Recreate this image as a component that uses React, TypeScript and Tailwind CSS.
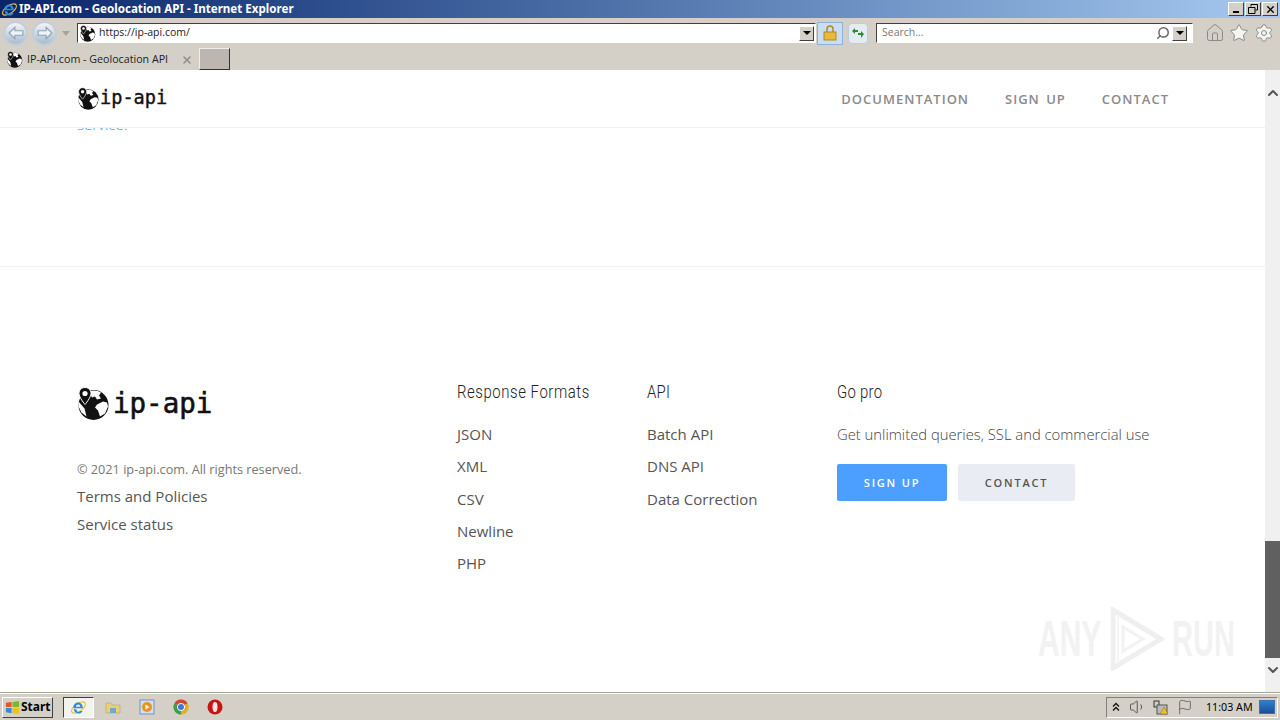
import { ChevronDown, ChevronUp, Flag, Home, Search, Settings, Star, Volume1, X } from "lucide-react";

const formatLinks = ["JSON", "XML", "CSV", "Newline", "PHP"];
const apiLinks = ["Batch API", "DNS API", "Data Correction"];

function Globe({ className }: { className: string }) {
  return (
    <svg viewBox="0 0 32 34" className={className}>
      <circle cx="16.5" cy="18.5" r="15" fill="#111" />
      <path d="M12 5c4-2 9-1 12 1l-2 3 2 3-4 1-2-3-3 1z" fill="#fff" />
      <path d="M20 18l6-3 4 1 1 4-3 7-5 3-2-6-3-3z" fill="#fff" />
      <path d="M1.5 15l6 7 2 8-5-4-3-6z" fill="#fff" />
      <path d="M8 1C4.5 1 2 3.5 2 7c0 4 6 11 6 11s6-7 6-11c0-3.500-2.500-6-6-6z" fill="#111" stroke="#fff" strokeWidth="1" />
      <circle cx="8" cy="7" r="2.600" fill="#fff" />
    </svg>
  );
}

function IeLogo({ className }: { className: string }) {
  return (
    <svg viewBox="0 0 20 20" className={className}>
      <ellipse cx="10" cy="10" rx="9.500" ry="4.500" transform="rotate(-35 10 10)" fill="none" stroke="#e8c040" strokeWidth="1.300" />
      <path d="M4 11h11c.4-4-2-7-5.500-7S3.500 7 4 11zm3-2c.3-1.500 1.300-2.500 2.700-2.500S12 7.500 12.200 9zM4.200 12c.6 3 2.800 5 5.700 5 2.300 0 4-1.100 4.900-3h-3c-.5.700-1.100 1-1.900 1-1.200 0-2.200-1-2.500-3z" fill="#2a8fd8" />
    </svg>
  );
}

function NavButton({ flip }: { flip?: boolean }) {
  return (
    <div className="flex h-[25px] w-[25px] items-center justify-center rounded-full border-2 border-[#c4ced9] bg-gradient-to-b from-[#f2f5f8] to-[#a9bccf]">
      <svg viewBox="0 0 14 12" className={`h-[14px] w-4 ${flip ? "rotate-180" : ""}`}>
        <path d="M1 6l5-5v3h7v4H6v3z" fill="#eef3f8" stroke="#8fa2b6" strokeWidth="1" />
      </svg>
    </div>
  );
}

function DropArrow() {
  return (
    <div className="flex h-[15px] w-[15px] shrink-0 items-center justify-center border border-[#404040] border-t-white border-l-white bg-[#d4d0c8]">
      <div className="h-0 w-0 border-x-[4px] border-t-[4px] border-x-transparent border-t-black" />
    </div>
  );
}

function WinButton({ children }: { children: React.ReactNode }) {
  return (
    <div className="flex h-[14px] w-4 items-center justify-center border border-[#404040] border-t-white border-l-white bg-[#d4d0c8] text-black">
      {children}
    </div>
  );
}

function Watermark() {
  return (
    <div className="pointer-events-none absolute top-[536px] left-[1038px] flex h-[66px] w-[194px] items-center justify-between font-['Liberation_Sans',sans-serif] text-[50px] leading-none font-bold text-[#f2f2f2]">
      <span className="inline-block w-[64px] origin-left scale-x-[0.6]">ANY</span>
      <svg viewBox="0 0 56 64" className="h-[64px] w-[56px] shrink-0">
        <path d="M4 3l48 29L4 61z" fill="none" stroke="#efefef" strokeWidth="5" />
        <path d="M14 20l20 12-20 12z" fill="none" stroke="#f2f2f2" strokeWidth="3" />
        <path d="M9 8v48" fill="none" stroke="#f5f5f5" strokeWidth="2" />
      </svg>
      <span className="inline-block w-[60px] origin-left scale-x-[0.58]">RUN</span>
    </div>
  );
}

export default function App() {
  return (
    <div className="flex h-[720px] w-[1280px] flex-col overflow-hidden bg-[#d4d0c8] font-['Open_Sans',sans-serif]">
      {/* Title bar */}
      <div className="flex h-[18px] shrink-0 items-center justify-between bg-gradient-to-r from-[#0a246a] to-[#a6caf0] pr-[2px] pl-[1px]">
        <div className="flex items-center gap-[1px]">
          <IeLogo className="h-[17px] w-[17px]" />
          <span className="font-['Noto_Sans',sans-serif] text-[11.600px] leading-none font-bold text-white">IP-API.com - Geolocation API - Internet Explorer</span>
        </div>
        <div className="flex items-center gap-[1px]">
          <WinButton><div className="mt-[6px] h-[2px] w-[6px] bg-black" /></WinButton>
          <WinButton>
            <svg viewBox="0 0 10 10" className="h-[10px] w-[10px]">
              <path d="M3 2.500V.500h6.500V6H7.500M.500 3.500h6.500V9.500H.500z" fill="none" stroke="#000" />
            </svg>
          </WinButton>
          <WinButton><X size={11} strokeWidth={3} /></WinButton>
        </div>
      </div>

      {/* Address row */}
      <div className="flex h-[27px] shrink-0 items-center pt-[3px] pl-[3px]">
        <NavButton />
        <div className="ml-[4px]"><NavButton flip /></div>
        <div className="mr-[7px] ml-[5px] h-0 w-0 border-x-[4px] border-t-[5px] border-x-transparent border-t-[#a8a49c]" />
        <div className="flex h-[20px] w-[739px] items-center border border-[#404040] border-r-white border-b-white bg-white pr-[1px]">
          <Globe className="ml-[1px] h-[17px] w-[17px]" />
          <span className="ml-[3px] flex-1 text-[10.500px] text-[#222]">https://ip-api.com/</span>
          <DropArrow />
        </div>
        <div className="ml-[1px] flex h-[23px] w-[26px] items-center justify-center border border-[#8fb2da] bg-[#c9def5]">
          <svg viewBox="0 0 14 16" className="h-[16px] w-[14px]">
            <path d="M4 7V4a3 3 0 016 0v3" fill="none" stroke="#b08a20" strokeWidth="1.500" />
            <rect x="1" y="7" width="12" height="8" fill="#e8b93a" stroke="#b08a20" />
          </svg>
        </div>
        <div className="ml-[5px] flex h-[21px] w-[20px] items-center justify-center rounded-sm border border-[#c0ccd8] bg-[#e3ebf3]">
          <svg viewBox="0 0 14 12" className="h-3 w-[14px]">
            <path d="M1 4l3-3v2h3v2H4v2zM13 7l-3-3v2H7v2h3v3z" fill="#2e8b2e" />
          </svg>
        </div>
        <div className="ml-[8px] flex h-[20px] w-[317px] items-center border border-[#404040] border-r-white border-b-white bg-white pr-[5px]">
          <span className="ml-[5px] flex-1 text-[10.500px] text-[#777]">Search...</span>
          <Search size={14} strokeWidth={2.500} className="-scale-x-100 text-[#666]" />
          <div className="ml-[2px]"><DropArrow /></div>
        </div>
        <div className="ml-[12px] flex items-center gap-[4px]">
          <Home size={20} className="text-[#8a8a84]" strokeWidth={1.200} />
          <Star size={20} className="text-[#8a8a84]" fill="#f4f4f2" strokeWidth={1.200} />
          <Settings size={20} className="ml-[1px] text-[#8a8a84]" fill="#f4f4f2" strokeWidth={1.200} />
        </div>
      </div>

      {/* Tab row */}
      <div className="flex h-[25px] shrink-0 items-end">
        <div className="flex h-[25px] w-[197px] items-center pt-[4px] pr-[4px] pl-[6px]">
          <Globe className="h-[17px] w-[17px]" />
          <span className="ml-[4px] flex-1 text-[10.700px] text-[#222]">IP-API.com - Geolocation API</span>
          <X size={12} strokeWidth={3} className="text-[#8f8b85]" />
        </div>
        <div className="ml-[2px] h-[22px] w-[31px] border border-[#eee] border-r-[#333] border-b-[#333] bg-[#bdb6b0]" />
      </div>

      {/* Page and scrollbar */}
      <div className="relative flex min-h-0 flex-1 border-b border-[#a8a49c] bg-white">
        <div className="min-w-0 flex-1">
          <header className="relative z-10 flex h-[58px] items-center justify-between border-b border-[#f2f2f2] bg-white pr-[96px] pl-[77px]">
            <div className="flex items-center gap-[1px]">
              <Globe className="h-[23px] w-[22px]" />
              <span className="font-['DejaVu_Sans_Mono',monospace] text-[18.600px] leading-none text-[#111] [-webkit-text-stroke:0.4px_#111]">ip-api</span>
            </div>
            <nav className="flex gap-[36px] pt-[2px] text-[13px] font-semibold tracking-[1px] text-[#8a8a8a] [word-spacing:2px]">
              <span>DOCUMENTATION</span>
              <span>SIGN UP</span>
              <span>CONTACT</span>
            </nav>
          </header>

          <div className="-mt-[16px] h-[155px] border-b border-[#f0f0f0] pl-[77px]">
            <span className="text-[15px] leading-[20px] font-light text-[#3d94ff]">service.</span>
          </div>

          <footer className="flex pt-[113px] pl-[77px]">
            <div className="w-[380px]">
              <div className="mt-[6px] flex items-center gap-[4px]">
                <Globe className="h-[35px] w-[32px]" />
                <span className="font-['DejaVu_Sans_Mono',monospace] text-[27.500px] leading-none text-[#111] [-webkit-text-stroke:0.6px_#111]">ip-api</span>
              </div>
              <p className="mt-[39px] text-[12.700px] leading-[18px] text-[#777]">© 2021 ip-api.com. All rights reserved.</p>
              <p className="mt-[4px] text-[15px] leading-[28px] text-[#555]">Terms and Policies</p>
              <p className="text-[15px] leading-[28px] text-[#555]">Service status</p>
            </div>

            <div className="w-[190px]">
              <h4 className="origin-left scale-x-[0.83] font-['Roboto',sans-serif] text-[18px] leading-[24px] font-light tracking-[0.670px] whitespace-nowrap text-[#222]">Response Formats</h4>
              <ul className="mt-[14px] text-[15px] leading-[32.250px] text-[#555]">
                {formatLinks.map((link) => <li key={link}>{link}</li>)}
              </ul>
            </div>

            <div className="w-[190px]">
              <h4 className="origin-left scale-x-[0.83] font-['Roboto',sans-serif] text-[18px] leading-[24px] font-light tracking-[0.300px] text-[#222]">API</h4>
              <ul className="mt-[14px] text-[15px] leading-[32.250px] text-[#555]">
                {apiLinks.map((link) => <li key={link}>{link}</li>)}
              </ul>
            </div>

            <div>
              <h4 className="origin-left scale-x-[0.83] font-['Roboto',sans-serif] text-[18px] leading-[24px] font-light tracking-[0.300px] text-[#222]">Go pro</h4>
              <p className="mt-[14px] text-[14.800px] leading-[32.250px] font-light text-[#444]">Get unlimited queries, SSL and commercial use</p>
              <div className="mt-[14px] flex gap-[11px] text-[11px] font-semibold tracking-[1.800px]">
                <div className="flex h-[37px] w-[110px] items-center justify-center rounded-[2px] bg-[#4d9fff] pt-[1px] text-white">SIGN UP</div>
                <div className="flex h-[37px] w-[117px] items-center justify-center rounded-[2px] bg-[#e9ecf2] pt-[1px] text-[#555]">CONTACT</div>
              </div>
            </div>
          </footer>
        </div>

        {/* Scrollbar */}
        <div className="flex w-[15px] shrink-0 flex-col bg-[#f0f0f0]">
          <ChevronUp size={16} strokeWidth={3} className="mt-[15px] text-[#555]" />
          <div className="mt-[440px] h-[117px] bg-[#606060]" />
          <ChevronDown size={16} strokeWidth={3} className="mt-[4px] text-[#555]" />
        </div>

        <Watermark />
      </div>

      {/* Taskbar */}
      <div className="flex h-[27px] shrink-0 items-center border-t border-white pr-[2px] pl-[2px]">
        <div className="flex h-[21px] w-[51px] items-center gap-[1px] border border-[#404040] border-t-white border-l-white pl-[2px]">
          <svg viewBox="0 0 16 16" className="h-[15px] w-[15px]">
            <path d="M1 3l6-1v5.500H1z" fill="#e0582a" />
            <path d="M8 2l7-1v6.500H8z" fill="#7ab82e" />
            <path d="M1 8.500h6V14l-6-1z" fill="#3a88d8" />
            <path d="M8 8.500h7V15l-7-1z" fill="#f0c020" />
          </svg>
          <span className="font-['Noto_Sans',sans-serif] text-[12px] leading-none font-bold text-black">Start</span>
        </div>
        <div className="ml-[10px] flex h-[21px] w-[31px] items-center justify-center border border-[#404040] border-r-white border-b-white bg-[#f4f2ee]">
          <IeLogo className="h-[17px] w-[17px]" />
        </div>
        <div className="ml-[11px] flex items-center gap-[18px]">
          <svg viewBox="0 0 16 16" className="h-4 w-4">
            <path d="M1 4h5l1 2h8v8H1z" fill="#e8cf7a" stroke="#a89a5a" strokeWidth="0.500" />
            <rect x="5" y="9" width="6" height="5" fill="#6fa8d0" />
          </svg>
          <svg viewBox="0 0 16 16" className="h-4 w-4">
            <rect x="1" y="1" width="14" height="14" fill="#cfe0f2" stroke="#6f94c0" />
            <circle cx="8" cy="8" r="5" fill="#f09020" />
            <path d="M6.500 5.500l4 2.500-4 2.500z" fill="#fff" />
          </svg>
          <svg viewBox="0 0 16 16" className="h-4 w-4">
            <circle cx="8" cy="8" r="7.500" fill="#e0b020" />
            <path d="M8 8L1.500 4.200A7.500 7.500 0 0114.500 4.200z" fill="#d8432e" />
            <path d="M8 8l6.500-3.800A7.500 7.500 0 018 15.500z" fill="#e0b020" />
            <path d="M8 8v7.500A7.500 7.500 0 011.500 4.200z" fill="#3f9e48" />
            <circle cx="8" cy="8" r="3.600" fill="#3b78d8" stroke="#fff" />
          </svg>
          <svg viewBox="0 0 16 16" className="h-4 w-4">
            <circle cx="8" cy="8" r="7.500" fill="#c81414" />
            <ellipse cx="8" cy="8" rx="2.500" ry="5" fill="#f4e4e4" />
          </svg>
        </div>

        <div className="ml-auto flex h-[21px] w-[172px] items-center border border-[#808080] border-r-white border-b-white pr-[2px] pl-[5px] text-[#555]">
          <svg viewBox="0 0 8 10" className="h-[10px] w-[8px]">
            <path d="M1 4.500l3-3 3 3M1 8.500l3-3 3 3" fill="none" stroke="#111" strokeWidth="1.300" />
          </svg>
          <Volume1 size={18} strokeWidth={1.300} className="ml-[9px]" />
          <svg viewBox="0 0 16 16" className="ml-[6px] h-4 w-4">
            <rect x="1" y="2" width="5" height="6" fill="none" stroke="#333" />
            <rect x="4" y="6" width="10" height="9" fill="#bbb" stroke="#555" />
            <path d="M11 8l4 7H7z" fill="#f0c020" stroke="#8a6a10" strokeWidth="0.500" />
          </svg>
          <Flag size={16} strokeWidth={1.200} className="ml-[8px]" />
          <span className="ml-[13px] font-['Noto_Sans',sans-serif] text-[10.700px] leading-none text-black">11:03 AM</span>
          <div className="ml-auto h-[14px] w-[16px] border border-[#4070b0] bg-gradient-to-b from-[#2f7fd0] to-[#1c4f98]" />
        </div>
      </div>
    </div>
  );
}
